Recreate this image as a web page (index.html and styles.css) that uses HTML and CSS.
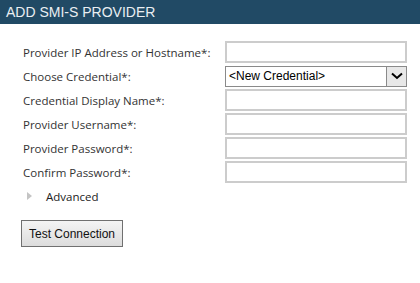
FILE: index.html
```html
<!DOCTYPE html>
<html lang="en">
<head>
    <meta charset="UTF-8">
    <title>Add SMI-S Provider</title>
    <link rel="stylesheet" href="styles.css">
</head>
<body>
    <div class="dialog">
        <header class="title-bar">ADD SMI-S PROVIDER</header>

        <form class="provider-form">
            <div class="row">
                <label for="host">Provider IP Address or Hostname*:</label>
                <input type="text" id="host">
            </div>
            <div class="row">
                <label for="cred">Choose Credential*:</label>
                <div class="select-box">
                    <span>&lt;New Credential&gt;</span>
                    <span class="select-arrow">
                        <svg width="12" height="8" viewBox="0 0 12 8"><path d="M1 1.5 L6 6 L11 1.5" fill="none" stroke="#000" stroke-width="2"/></svg>
                    </span>
                </div>
            </div>
            <div class="row">
                <label for="display">Credential Display Name*:</label>
                <input type="text" id="display">
            </div>
            <div class="row">
                <label for="user">Provider Username*:</label>
                <input type="text" id="user">
            </div>
            <div class="row">
                <label for="pass">Provider Password*:</label>
                <input type="password" id="pass">
            </div>
            <div class="row">
                <label for="confirm">Confirm Password*:</label>
                <input type="password" id="confirm">
            </div>

            <div class="advanced">
                <span class="caret"></span>
                <span>Advanced</span>
            </div>

            <button type="button" class="test-btn">Test Connection</button>
        </form>
    </div>
</body>
</html>
```

FILE: styles.css
```css
/* page */
body {
    margin: 0;
    background: #ffffff;
    font-family: "Open Sans", "Liberation Sans", sans-serif;
    color: #333333;
}

.title-bar {
    background-color: #214a65;
    color: #e9eef2;
    font-family: "Liberation Sans", Arial, sans-serif;
    font-size: 14px;
    height: 24px;
    line-height: 25px;
    padding-left: 6px;
}

/* form */
.provider-form {
    padding: 16px 0 0 21px;
}

.row {
    display: flex;
    align-items: center;
    height: 24px;
}

.row label {
    width: 202px;
    padding-left: 2px;
    font-size: 11.5px;
}

.row input {
    box-sizing: border-box;
    width: 182px;
    height: 22px;
    margin: 0;
    border: 2px solid #cccccc;
    padding: 0 3px;
}

.select-box {
    box-sizing: border-box;
    width: 182px;
    height: 21px;
    display: flex;
    align-items: center;
    justify-content: space-between;
    border: 1px solid #8a8a8a;
    padding-left: 3px;
    font-family: "Liberation Sans", Arial, sans-serif;
    font-size: 12px;
    color: #000000;
}

.select-arrow {
    box-sizing: border-box;
    width: 20px;
    height: 19px;
    display: flex;
    align-items: center;
    justify-content: center;
    border-left: 1px solid #8a8a8a;
    background: #e8e8e8;
}

.advanced {
    display: flex;
    align-items: center;
    height: 24px;
    font-size: 11.5px;
    color: #222222;
}

.caret {
    width: 0;
    height: 0;
    margin: 0 14px 0 6px;
    border-top: 4px solid transparent;
    border-bottom: 4px solid transparent;
    border-left: 5px solid #c4c4c4;
}

.test-btn {
    margin-top: 12px;
    width: 102px;
    height: 27px;
    border: 1px solid #707070;
    background: linear-gradient(#f4f4f4, #dcdcdc);
    font-family: "Liberation Sans", Arial, sans-serif;
    font-size: 12px;
    color: #111111;
    padding: 0;
}
```
